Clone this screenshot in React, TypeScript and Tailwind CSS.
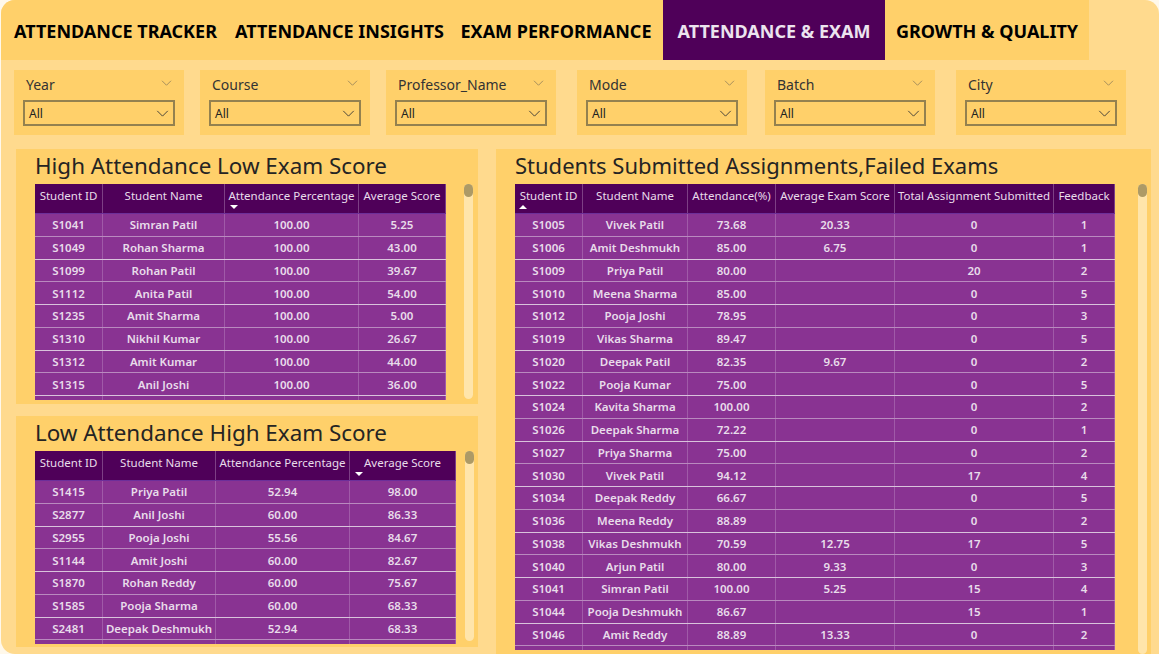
import React from 'react';

const font = "font-['Noto_Sans','Open_Sans',sans-serif]";

const tabs = [
  { label: 'ATTENDANCE TRACKER', w: 'w-[229px]', active: false },
  { label: 'ATTENDANCE INSIGHTS', w: 'w-[219px]', active: false },
  { label: 'EXAM PERFORMANCE', w: 'w-[214px]', active: false },
  { label: 'ATTENDANCE & EXAM', w: 'w-[222px]', active: true },
  { label: 'GROWTH & QUALITY', w: 'w-[204px]', active: false },
];

const filters = [
  { label: 'Year', ml: 'ml-[14px]' },
  { label: 'Course', ml: 'ml-[16px]' },
  { label: 'Professor_Name', ml: 'ml-[16px]' },
  { label: 'Mode', ml: 'ml-[21px]' },
  { label: 'Batch', ml: 'ml-[18px]' },
  { label: 'City', ml: 'ml-[21px]' },
];

type Col = { title: string; w: string; sort?: 'up' | 'down' };

const highCols: Col[] = [
  { title: 'Student ID', w: 'w-[68px]' },
  { title: 'Student Name', w: 'w-[122px]' },
  { title: 'Attendance Percentage', w: 'w-[134px]', sort: 'down' },
  { title: 'Average Score', w: 'w-[87px]' },
];
const highRows = [
  ['S1041', 'Simran Patil', '100.00', '5.25'],
  ['S1049', 'Rohan Sharma', '100.00', '43.00'],
  ['S1099', 'Rohan Patil', '100.00', '39.67'],
  ['S1112', 'Anita Patil', '100.00', '54.00'],
  ['S1235', 'Amit Sharma', '100.00', '5.00'],
  ['S1310', 'Nikhil Kumar', '100.00', '26.67'],
  ['S1312', 'Amit Kumar', '100.00', '44.00'],
  ['S1315', 'Anil Joshi', '100.00', '36.00'],
];

const lowCols: Col[] = [
  { title: 'Student ID', w: 'w-[68px]' },
  { title: 'Student Name', w: 'w-[113px]' },
  { title: 'Attendance Percentage', w: 'w-[134px]' },
  { title: 'Average Score', w: 'w-[106px]', sort: 'down' },
];
const lowRows = [
  ['S1415', 'Priya Patil', '52.94', '98.00'],
  ['S2877', 'Anil Joshi', '60.00', '86.33'],
  ['S2955', 'Pooja Joshi', '55.56', '84.67'],
  ['S1144', 'Amit Joshi', '60.00', '82.67'],
  ['S1870', 'Rohan Reddy', '60.00', '75.67'],
  ['S1585', 'Pooja Sharma', '60.00', '68.33'],
  ['S2481', 'Deepak Deshmukh', '52.94', '68.33'],
];

const failCols: Col[] = [
  { title: 'Student ID', w: 'w-[68px]', sort: 'up' },
  { title: 'Student Name', w: 'w-[105px]' },
  { title: 'Attendance(%)', w: 'w-[88px]' },
  { title: 'Average Exam Score', w: 'w-[119px]' },
  { title: 'Total Assignment Submitted', w: 'w-[159px]' },
  { title: 'Feedback', w: 'w-[61px]' },
];
const failRows = [
  ['S1005', 'Vivek Patil', '73.68', '20.33', '0', '1'],
  ['S1006', 'Amit Deshmukh', '85.00', '6.75', '0', '1'],
  ['S1009', 'Priya Patil', '80.00', '', '20', '2'],
  ['S1010', 'Meena Sharma', '85.00', '', '0', '5'],
  ['S1012', 'Pooja Joshi', '78.95', '', '0', '3'],
  ['S1019', 'Vikas Sharma', '89.47', '', '0', '5'],
  ['S1020', 'Deepak Patil', '82.35', '9.67', '0', '2'],
  ['S1022', 'Pooja Kumar', '75.00', '', '0', '5'],
  ['S1024', 'Kavita Sharma', '100.00', '', '0', '2'],
  ['S1026', 'Deepak Sharma', '72.22', '', '0', '1'],
  ['S1027', 'Priya Sharma', '75.00', '', '0', '2'],
  ['S1030', 'Vivek Patil', '94.12', '', '17', '4'],
  ['S1034', 'Deepak Reddy', '66.67', '', '0', '5'],
  ['S1036', 'Meena Reddy', '88.89', '', '0', '2'],
  ['S1038', 'Vikas Deshmukh', '70.59', '12.75', '17', '5'],
  ['S1040', 'Arjun Patil', '80.00', '9.33', '0', '3'],
  ['S1041', 'Simran Patil', '100.00', '5.25', '15', '4'],
  ['S1044', 'Pooja Deshmukh', '86.67', '', '15', '1'],
  ['S1046', 'Amit Reddy', '88.89', '13.33', '0', '2'],
];

function Chevron({ className }: { className: string }) {
  return (
    <svg viewBox="0 0 14 8" className={className} fill="none" stroke="currentColor" strokeWidth="1">
      <path d="M1 1l6 6 6-6" />
    </svg>
  );
}

function Filter({ label, ml }: { label: string; ml: string }) {
  return (
    <div className={`${ml} w-[170px] h-[65px] bg-[#ffd06a] pl-[9px] pr-[9px] shrink-0`}>
      <div className="h-[30px] flex items-center justify-between pl-[3px] pr-[3px] text-[#333]">
        <span className="text-[14px] leading-none">{label}</span>
        <Chevron className="w-[11px] h-[6px] text-[#8a7a58] mb-[5px]" />
      </div>
      <div className="h-[26px] border-2 border-[#94814f] flex items-center justify-between pl-[4px] pr-[4px] text-[#222]">
        <span className="text-[12px] leading-none pt-[2px]">All</span>
        <Chevron className="w-[13px] h-[7px] text-[#333]" />
      </div>
    </div>
  );
}

function Scrollbar({ h, ml }: { h: string; ml: string }) {
  return (
    <div className={`${h} ${ml} w-[9px] bg-[#ffe5ab] rounded-full shrink-0`}>
      <div className="h-[13px] bg-[#ad9a66] rounded-full" />
    </div>
  );
}

function Table({ cols, rows, width }: { cols: Col[]; rows: string[][]; width: string }) {
  return (
    <div className={`${width} shrink-0 text-[#e8dcea]`}>
      <div className="flex h-[30px] bg-[#4f0059] border-b border-[#6d2f9a]">
        {cols.map((c) => (
          <div key={c.title} className={`${c.w} relative shrink-0 border-r border-[#7d3f85] text-center text-[11.5px] leading-[24px] whitespace-nowrap`}>
            {c.title}
            {c.sort === 'down' && (
              <span className="absolute left-[5px] bottom-[4px] w-0 h-0 border-x-[4.5px] border-x-transparent border-t-[4px] border-t-white" />
            )}
            {c.sort === 'up' && (
              <span className="absolute left-[4px] bottom-[4px] w-0 h-0 border-x-[4.5px] border-x-transparent border-b-[4px] border-b-white" />
            )}
          </div>
        ))}
      </div>
      {rows.map((r, i) => (
        <div key={i} className={`flex h-[22.75px] bg-[#893392] border-b ${i % 2 ? 'border-[#d9c3dc]' : 'border-[#b98abf]'}`}>
          {cols.map((c, j) => (
            <div key={c.title} className={`${c.w} shrink-0 border-r border-[#a05aa8] flex items-center justify-center text-[11.5px] font-semibold whitespace-nowrap`}>
              {r[j]}
            </div>
          ))}
        </div>
      ))}
      <div className="flex h-[4px] bg-[#893392]">
        {cols.map((c) => (
          <div key={c.title} className={`${c.w} shrink-0 border-r border-[#a05aa8]`} />
        ))}
      </div>
    </div>
  );
}

export default function App() {
  return (
    <div className={`${font} w-[1159px] h-[654px] overflow-hidden bg-[#fff8ea]`}>
      <div className="w-[1158px] h-[654px] ml-[1px] bg-[#ffda8e] rounded-t-[14px] rounded-bl-[14px] overflow-hidden">
        {/* Tabs */}
        <div className="flex h-[60px]">
          {tabs.map((t) => (
            <div
              key={t.label}
              className={`${t.w} flex items-center justify-center pt-[2px] text-[18px] font-bold whitespace-nowrap ${
                t.active ? 'bg-[#4f0059] text-[#ece4ef]' : 'bg-[#ffd06a] text-black'
              }`}
            >
              {t.label}
            </div>
          ))}
        </div>

        {/* Slicers */}
        <div className="flex mt-[10px] -ml-[1px]">
          {filters.map((f) => (
            <Filter key={f.label} label={f.label} ml={f.ml} />
          ))}
        </div>

        {/* Panels */}
        <div className="flex mt-[14px] ml-[15px]">
          <div className="w-[462px] shrink-0">
            <div className="h-[255px] bg-[#ffd06a] pl-[19px]">
              <div className="h-[35px] text-[22.4px] leading-[33px] text-[#252423] whitespace-nowrap">High Attendance Low Exam Score</div>
              <div className="flex">
                <Table cols={highCols} rows={highRows} width="w-[411px]" />
                <Scrollbar h="h-[215px]" ml="ml-[18px]" />
              </div>
            </div>
            <div className="h-[231px] mt-[12px] bg-[#ffd06a] pl-[19px]">
              <div className="h-[35px] text-[22.4px] leading-[33px] text-[#252423] whitespace-nowrap">Low Attendance High Exam Score</div>
              <div className="flex">
                <Table cols={lowCols} rows={lowRows} width="w-[421px]" />
                <Scrollbar h="h-[190px]" ml="ml-[9px]" />
              </div>
            </div>
          </div>
          <div className="w-[655px] h-[520px] ml-[18px] bg-[#ffd06a] pl-[19px] shrink-0">
            <div className="h-[35px] text-[22px] leading-[33px] text-[#252423] whitespace-nowrap">Students Submitted Assignments,Failed Exams</div>
            <div className="flex">
              <Table cols={failCols} rows={failRows} width="w-[600px]" />
              <Scrollbar h="h-[470px]" ml="ml-[23px]" />
            </div>
          </div>
        </div>
      </div>
    </div>
  );
}
